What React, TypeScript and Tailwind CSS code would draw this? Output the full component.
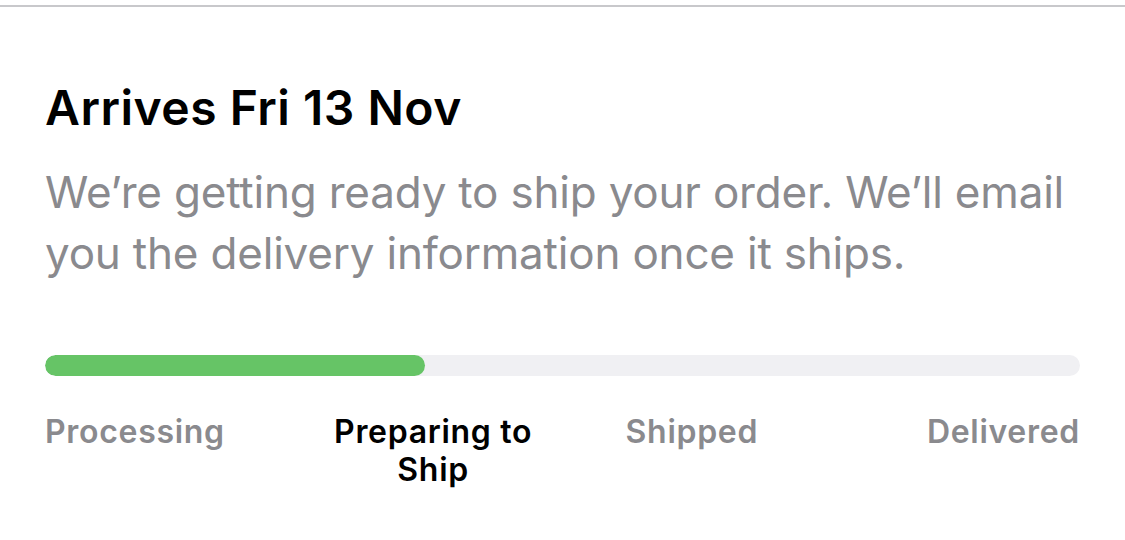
export default function App() {
  const steps = ["Processing", "Preparing to Ship", "Shipped", "Delivered"];
  const current = 1;

  return (
    <main className="min-h-screen w-full bg-white font-['Inter',sans-serif]">
      <div className="pt-[5px]">
        <div className="h-[2px] bg-[#c8c8cb]" />
      </div>

      <section className="px-[45px] pt-[73px]">
        <h1 className="text-[48px] font-semibold leading-[56px] tracking-[0.5px] text-black">
          Arrives Fri 13 Nov
        </h1>
        <p className="mt-[26px] max-w-[1035px] text-[44px] leading-[61px] tracking-[-0.2px] text-[#8a8a8e]">
          We’re getting ready to ship your order. We’ll email you the delivery
          information once it ships.
        </p>

        {/* progress */}
        <div className="mt-[71px] w-[1035px]">
          <div className="h-[21px] w-full overflow-hidden rounded-full bg-[#f0f0f3]">
            <div className="h-full w-[380px] rounded-full bg-[#66c466]" />
          </div>

          <div className="mt-[37px] grid grid-cols-4 text-[32px] font-semibold leading-[38px] tracking-[0.7px]">
            {steps.map((s, i) => (
              <div
                key={s}
                className={
                  (i === 0
                    ? "text-left"
                    : i === steps.length - 1
                    ? "text-right"
                    : "text-center px-[10px]") +
                  (i === current ? " text-black" : " text-[#8a8a8e]")
                }
              >
                {s}
              </div>
            ))}
          </div>
        </div>
      </section>
    </main>
  );
}
